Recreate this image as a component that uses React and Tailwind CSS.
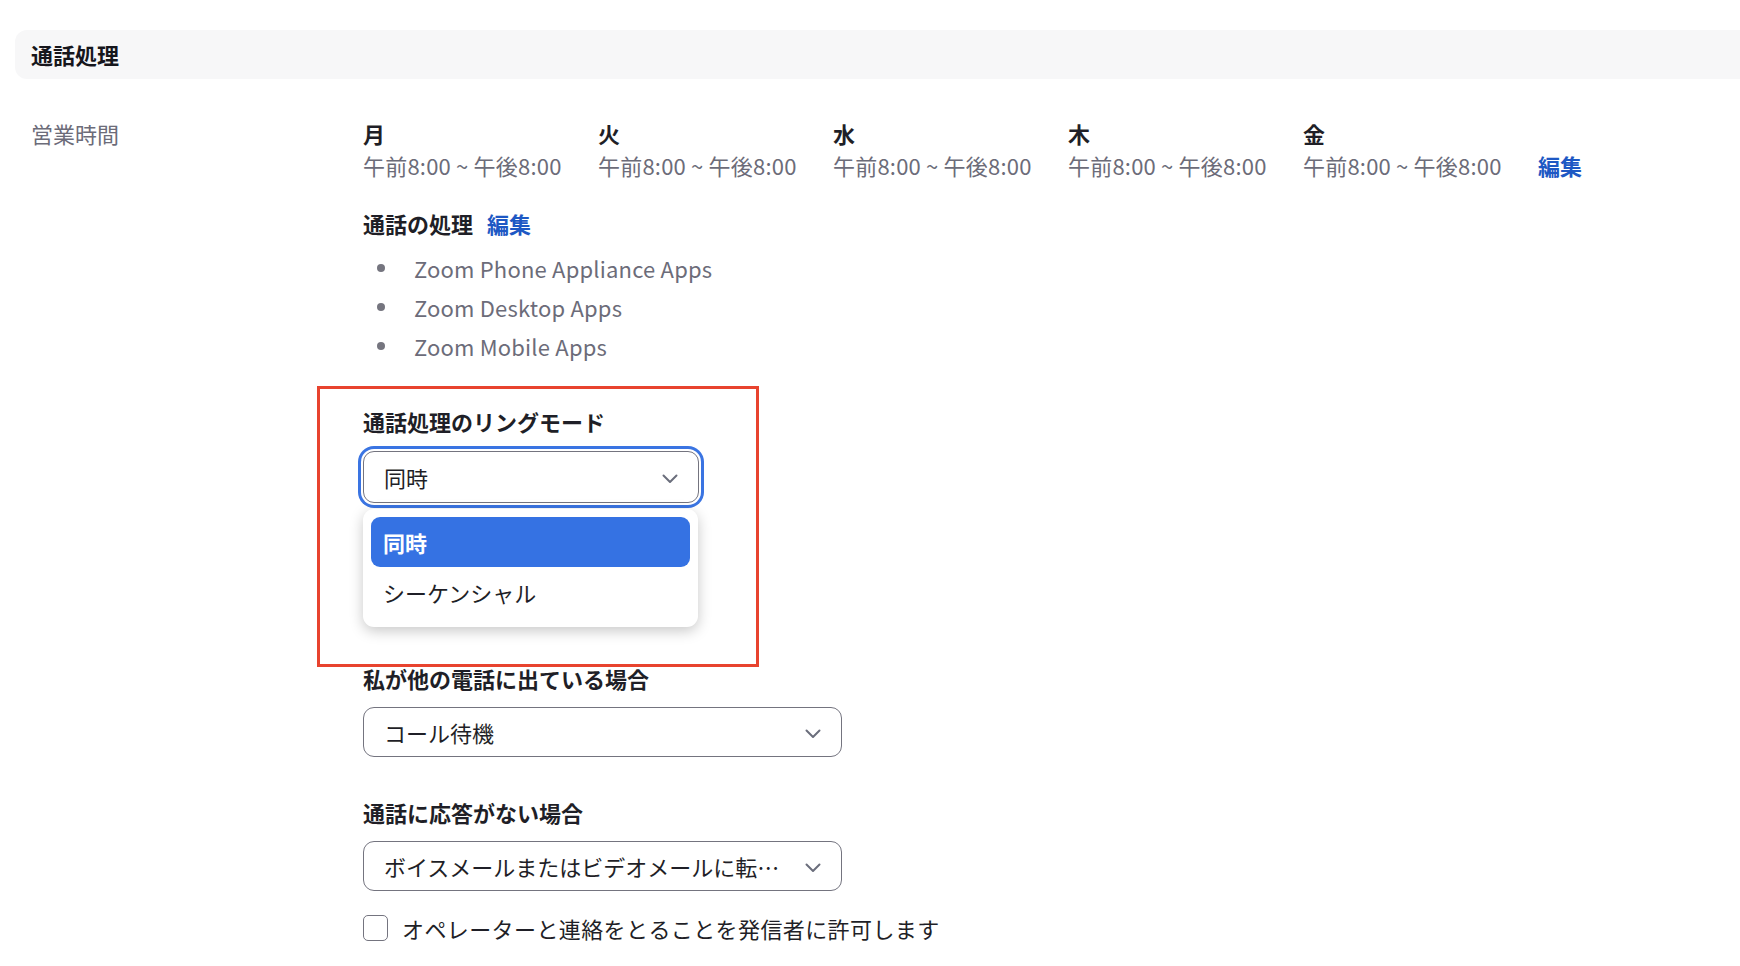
import React from "react";

const days = ["月", "火", "水", "木", "金"];
const apps = ["Zoom Phone Appliance Apps", "Zoom Desktop Apps", "Zoom Mobile Apps"];

const Chevron = () => (
  <svg width="16" height="10" viewBox="0 0 16 10" fill="none" className="shrink-0 mt-[4px]">
    <path d="M1.5 1.5 8 8l6.5-6.5" stroke="#6b6e7c" strokeWidth="2" strokeLinecap="round" strokeLinejoin="round" />
  </svg>
);

const Select = ({ value, focused, width }) => (
  <div
    className={`flex items-center justify-between pl-[20px] pr-[20px] rounded-[11px] border border-[#74747f] bg-white ${width} ${
      focused ? "ring-[3px] ring-[#3a74e2] ring-offset-2" : ""
    }`}
  >
    <span className="truncate text-[#1f1f27]">{value}</span>
    <Chevron />
  </div>
);

const App = () => {
  return (
    <div
      className="w-full h-[966px] bg-white overflow-hidden text-[22px] leading-[32px]"
      style={{ fontFamily: '"Noto Sans CJK JP", "Noto Sans", sans-serif' }}
    >
      {/* Header */}
      <div className="mt-[30px] ml-[15px] h-[49px] flex items-center pl-[16px] bg-[#f7f7f8] rounded-l-[12px]">
        <span className="font-semibold text-[#16161c] -mt-[2px]">通話処理</span>
      </div>

      <div className="flex pt-[38px]">
        <div className="w-[363px] pl-[31px] text-[#6c6c79]">営業時間</div>

        <div className="flex-1">
          {/* Business hours */}
          <div className="flex items-end">
            {days.map((d) => (
              <div key={d} className="w-[235px]">
                <div className="font-bold text-[#1f1f27]">{d}</div>
                <div className="text-[#6c6c79] whitespace-nowrap tracking-[0.2px]">午前8:00 ~ 午後8:00</div>
              </div>
            ))}
            <span className="text-[#1e58c4] font-semibold">編集</span>
          </div>

          {/* Call handling */}
          <div className="mt-[26px] flex gap-[14px]">
            <span className="font-bold text-[#1f1f27]">通話の処理</span>
            <span className="text-[#1e58c4] font-semibold">編集</span>
          </div>
          <ul className="mt-[9px]">
            {apps.map((a) => (
              <li key={a} className="flex items-center h-[39px] text-[#6c6c79] tracking-[0.2px]">
                <span className="w-[8px] h-[8px] rounded-full bg-[#75757f] ml-[14px] mr-[29px]" />
                {a}
              </li>
            ))}
          </ul>

          {/* Ring mode */}
          <div className="relative mt-[40px]">
            <div className="absolute -left-[46px] -top-[19px] w-[442px] h-[281px] border-[3px] border-[#e8432e] pointer-events-none" />
            <div className="font-bold text-[#1f1f27]">通話処理のリングモード</div>
            <div className="relative mt-[14px] w-[336px]">
              <Select value="同時" focused width="w-[336px] h-[52px]" />
              <div className="absolute left-0 top-full mt-[6px] w-[335px] bg-white rounded-[11px] shadow-[0_4px_14px_rgba(0,0,0,0.22)] px-[8px] pt-[8px] pb-[10px] z-10">
                <div className="h-[50px] flex items-center pl-[12px] rounded-[9px] bg-[#3572e3] text-white font-bold">
                  同時
                </div>
                <div className="h-[50px] flex items-center pl-[12px] text-[#1f1f27]">シーケンシャル</div>
              </div>
            </div>
          </div>

          {/* Busy */}
          <div className="mt-[159px] font-bold text-[#1f1f27]">私が他の電話に出ている場合</div>
          <div className="mt-[13px]">
            <Select value="コール待機" width="w-[479px] h-[50px]" />
          </div>

          {/* No answer */}
          <div className="mt-[39px] font-bold text-[#1f1f27]">通話に応答がない場合</div>
          <div className="mt-[13px]">
            <Select value="ボイスメールまたはビデオメールに転…" width="w-[479px] h-[50px]" />
          </div>

          <label className="mt-[21px] flex items-center gap-[14px]">
            <span className="w-[25px] h-[26px] rounded-[5px] border border-[#74747f] bg-white" />
            <span className="text-[#1f1f27] tracking-[0.4px]">オペレーターと連絡をとることを発信者に許可します</span>
          </label>
        </div>
      </div>
    </div>
  );
};

export default App;
